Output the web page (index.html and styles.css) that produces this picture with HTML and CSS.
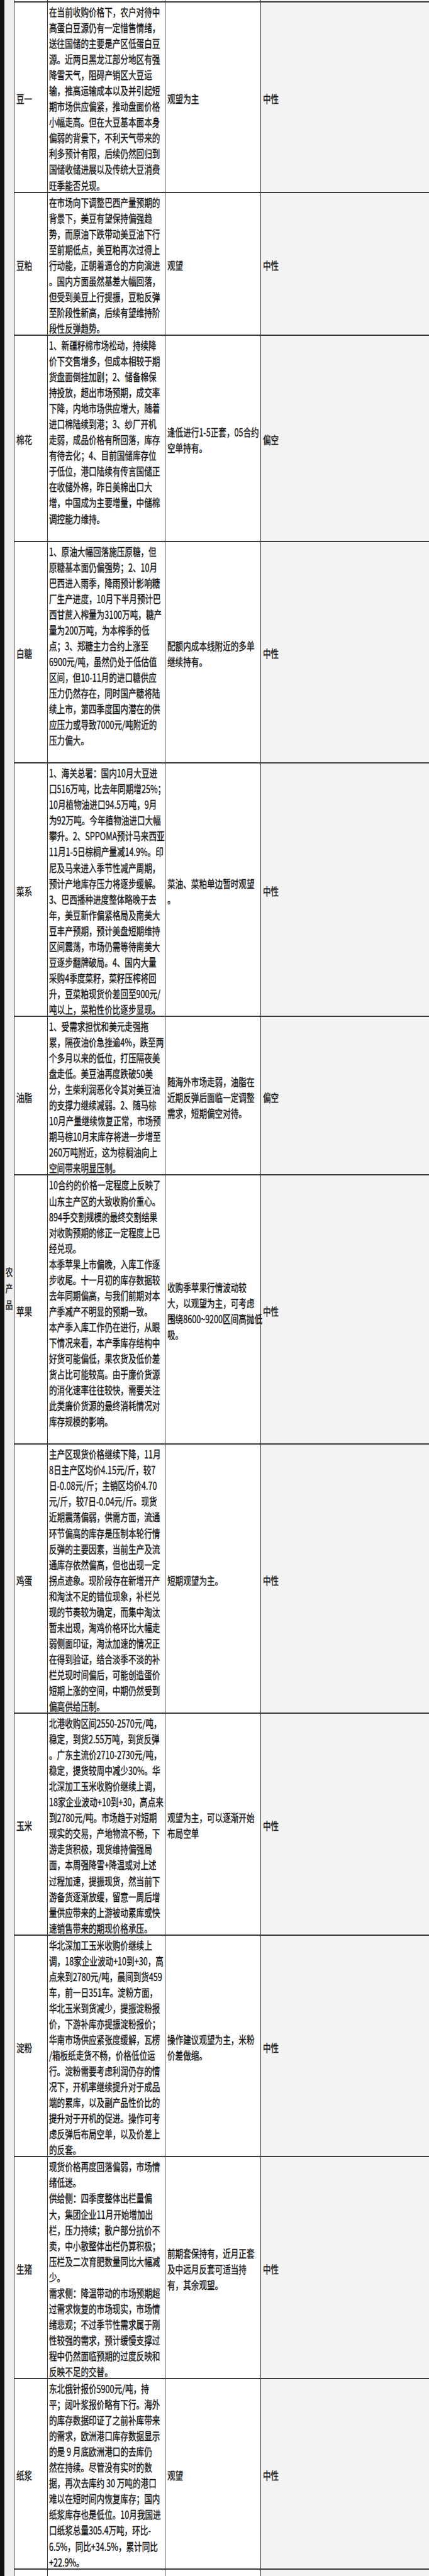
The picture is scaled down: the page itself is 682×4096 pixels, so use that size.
FILE: index.html
```html
<!DOCTYPE html>
<html lang="zh-CN">
<head>
<meta charset="utf-8">
<title>农产品策略</title>
<link rel="stylesheet" href="styles.css">
</head>
<body>
<div class="sheet">
  <div class="edge"></div>
  <table class="grid">
    <colgroup>
      <col class="c-sector"><col class="c-name"><col class="c-text"><col class="c-plan"><col class="c-view">
    </colgroup>
    <tbody>
      <tr class="stub">
        <td class="sector" rowspan="14"><span class="ln">农</span><span class="ln">产</span><span class="ln">品</span></td>
        <td class="name"></td><td class="text"></td><td class="plan"></td><td class="view"></td>
      </tr>
      <tr>
        <td class="name"><span class="ln">豆一</span></td>
        <td class="text"><span class="ln">在当前收购价格下，农户对待中</span><span class="ln">高蛋白豆源仍有一定惜售情绪，</span><span class="ln">送往国储的主要是产区低蛋白豆</span><span class="ln">源。近两日黑龙江部分地区有强</span><span class="ln">降雪天气，阻碍产销区大豆运</span><span class="ln">输，推高运输成本以及并引起短</span><span class="ln">期市场供应偏紧，推动盘面价格</span><span class="ln">小幅走高。但在大豆基本面本身</span><span class="ln">偏弱的背景下，不利天气带来的</span><span class="ln">利多预计有限，后续仍然回归到</span><span class="ln">国储收储进展以及传统大豆消费</span><span class="ln">旺季能否兑现。</span></td>
        <td class="plan"><span class="ln">观望为主</span></td>
        <td class="view"><span class="ln">中性</span></td>
      </tr>
      <tr>
        <td class="name"><span class="ln">豆粕</span></td>
        <td class="text"><span class="ln">在市场向下调整巴西产量预期的</span><span class="ln">背景下，美豆有望保持偏强趋</span><span class="ln">势，而原油下跌带动美豆油下行</span><span class="ln">至前期低点，美豆粕再次过得上</span><span class="ln">行动能，正朝着逼仓的方向演进</span><span class="ln">。国内方面虽然基差大幅回落，</span><span class="ln">但受到美豆上行提振，豆粕反弹</span><span class="ln">至阶段性新高，后续有望维持阶</span><span class="ln">段性反弹趋势。</span></td>
        <td class="plan"><span class="ln">观望</span></td>
        <td class="view"><span class="ln">中性</span></td>
      </tr>
      <tr>
        <td class="name"><span class="ln">棉花</span></td>
        <td class="text tail"><span class="ln">1、新疆籽棉市场松动，持续降</span><span class="ln">价下交售增多，但成本相较于期</span><span class="ln">货盘面倒挂加剧；2、储备棉保</span><span class="ln">持投放，超出市场预期，成交率</span><span class="ln">下降，内地市场供应增大，随着</span><span class="ln">进口棉陆续到港；3、纱厂开机</span><span class="ln">走弱，成品价格有所回落，库存</span><span class="ln">有待去化；4、目前国储库存位</span><span class="ln">于低位，港口陆续有传言国储正</span><span class="ln">在收储外棉，昨日美棉出口大</span><span class="ln">增，中国成为主要增量，中储棉</span><span class="ln">调控能力维持。</span></td>
        <td class="plan"><span class="ln">逢低进行1-5正套，05合约</span><span class="ln">空单持有。</span></td>
        <td class="view"><span class="ln">偏空</span></td>
      </tr>
      <tr>
        <td class="name"><span class="ln">白糖</span></td>
        <td class="text tail"><span class="ln">1、原油大幅回落施压原糖，但</span><span class="ln">原糖基本面仍偏强势；2、10月</span><span class="ln">巴西进入雨季，降雨预计影响糖</span><span class="ln">厂生产进度，10月下半月预计巴</span><span class="ln">西甘蔗入榨量为3100万吨，糖产</span><span class="ln">量为200万吨，为本榨季的低</span><span class="ln">点；3、郑糖主力合约上涨至</span><span class="ln">6900元/吨，虽然仍处于低估值</span><span class="ln">区间，但10-11月的进口糖供应</span><span class="ln">压力仍然存在，同时国产糖将陆</span><span class="ln">续上市，第四季度国内潜在的供</span><span class="ln">应压力或导致7000元/吨附近的</span><span class="ln">压力偏大。</span></td>
        <td class="plan"><span class="ln">配额内成本线附近的多单</span><span class="ln">继续持有。</span></td>
        <td class="view"><span class="ln">中性</span></td>
      </tr>
      <tr>
        <td class="name"><span class="ln">菜系</span></td>
        <td class="text"><span class="ln">1、海关总署：国内10月大豆进</span><span class="ln">口516万吨，比去年同期增25%；</span><span class="ln">10月植物油进口94.5万吨，9月</span><span class="ln">为92万吨。今年植物油进口大幅</span><span class="ln">攀升。2、SPPOMA预计马来西亚</span><span class="ln">11月1-5日棕榈产量减14.9%。印</span><span class="ln">尼及马来进入季节性减产周期，</span><span class="ln">预计产地库存压力将逐步缓解。</span><span class="ln">3、巴西播种进度整体略晚于去</span><span class="ln">年，美豆新作偏紧格局及南美大</span><span class="ln">豆丰产预期，预计美盘短期维持</span><span class="ln">区间震荡，市场仍需等待南美大</span><span class="ln">豆逐步翻牌破局。4、国内大量</span><span class="ln">采购4季度菜籽，菜籽压榨将回</span><span class="ln">升，豆菜粕现货价差回至900元/</span><span class="ln">吨以上，菜粕性价比逐步显现。</span></td>
        <td class="plan"><span class="ln">菜油、菜粕单边暂时观望</span><span class="ln">。</span></td>
        <td class="view"><span class="ln">中性</span></td>
      </tr>
      <tr>
        <td class="name"><span class="ln">油脂</span></td>
        <td class="text"><span class="ln">1、受需求担忧和美元走强拖</span><span class="ln">累，隔夜油价急挫逾4%，跌至两</span><span class="ln">个多月以来的低位，打压隔夜美</span><span class="ln">盘走低。美豆油再度跌破50美</span><span class="ln">分，生柴利润恶化令其对美豆油</span><span class="ln">的支撑力继续减弱。2、随马棕</span><span class="ln">10月产量继续恢复正常，市场预</span><span class="ln">期马棕10月末库存将进一步增至</span><span class="ln">260万吨附近，这为棕榈油向上</span><span class="ln">空间带来明显压制。</span></td>
        <td class="plan"><span class="ln">随海外市场走弱，油脂在</span><span class="ln">近期反弹后面临一定调整</span><span class="ln">需求，短期偏空对待。</span></td>
        <td class="view"><span class="ln">偏空</span></td>
      </tr>
      <tr>
        <td class="name"><span class="ln">苹果</span></td>
        <td class="text tail"><span class="ln">10合约的价格一定程度上反映了</span><span class="ln">山东主产区的大致收购价重心。</span><span class="ln">894手交割规模的最终交割结果</span><span class="ln">对收购预期的修正一定程度上已</span><span class="ln">经兑现。</span><span class="ln">本季苹果上市偏晚，入库工作逐</span><span class="ln">步收尾。十一月初的库存数据较</span><span class="ln">去年同期偏高，与我们前期对本</span><span class="ln">产季减产不明显的预期一致。</span><span class="ln">本产季入库工作仍在进行，从眼</span><span class="ln">下情况来看，本产季库存结构中</span><span class="ln">好货可能偏低，果农货及低价差</span><span class="ln">货占比可能较高。由于廉价货源</span><span class="ln">的消化速率往往较快，需要关注</span><span class="ln">此类廉价货源的最终消耗情况对</span><span class="ln">库存规模的影响。</span></td>
        <td class="plan"><span class="ln">收购季苹果行情波动较</span><span class="ln">大，以观望为主，可考虑</span><span class="ln">围绕8600~9200区间高抛低</span><span class="ln">吸。</span></td>
        <td class="view"><span class="ln">中性</span></td>
      </tr>
      <tr>
        <td class="name"><span class="ln">鸡蛋</span></td>
        <td class="text"><span class="ln">主产区现货价格继续下降，11月</span><span class="ln">8日主产区均价4.15元/斤，较7</span><span class="ln">日-0.08元/斤；主销区均价4.70</span><span class="ln">元/斤，较7日-0.04元/斤。现货</span><span class="ln">近期震荡偏弱，供需方面，流通</span><span class="ln">环节偏高的库存是压制本轮行情</span><span class="ln">反弹的主要因素，当前生产及流</span><span class="ln">通库存依然偏高，但也出现一定</span><span class="ln">拐点迹象。现阶段存在新增开产</span><span class="ln">和淘汰不足的错位现象，补栏兑</span><span class="ln">现的节奏较为确定，而集中淘汰</span><span class="ln">暂未出现，淘鸡价格环比大幅走</span><span class="ln">弱侧面印证，淘汰加速的情况正</span><span class="ln">在得到验证，结合淡季不淡的补</span><span class="ln">栏兑现时间偏后，可能创造蛋价</span><span class="ln">短期上涨的空间，中期仍然受到</span><span class="ln">偏高供给压制。</span></td>
        <td class="plan"><span class="ln">短期观望为主。</span></td>
        <td class="view"><span class="ln">中性</span></td>
      </tr>
      <tr>
        <td class="name"><span class="ln">玉米</span></td>
        <td class="text"><span class="ln">北港收购区间2550-2570元/吨，</span><span class="ln">稳定，到货2.55万吨，到货反弹</span><span class="ln">。广东主流价2710-2730元/吨，</span><span class="ln">稳定，提货较周中减少30%。华</span><span class="ln">北深加工玉米收购价继续上调，</span><span class="ln">18家企业波动+10到+30，高点来</span><span class="ln">到2780元/吨。市场趋于对短期</span><span class="ln">现实的交易，产地物流不畅，下</span><span class="ln">游走货积极，现货维持偏强局</span><span class="ln">面，本周强降雪+降温或对上述</span><span class="ln">过程加速，提振现货，然当前下</span><span class="ln">游备货逐渐放缓，留意一周后增</span><span class="ln">量供应带来的上游被动累库或快</span><span class="ln">速销售带来的期现价格承压。</span></td>
        <td class="plan"><span class="ln">观望为主，可以逐渐开始</span><span class="ln">布局空单</span></td>
        <td class="view"><span class="ln">中性</span></td>
      </tr>
      <tr>
        <td class="name"><span class="ln">淀粉</span></td>
        <td class="text"><span class="ln">华北深加工玉米收购价继续上</span><span class="ln">调，18家企业波动+10到+30，高</span><span class="ln">点来到2780元/吨，晨间到货459</span><span class="ln">车，前一日351车。淀粉方面，</span><span class="ln">华北玉米到货减少，提振淀粉报</span><span class="ln">价，下游补库亦提振淀粉报价；</span><span class="ln">华南市场供应紧张度缓解，瓦楞</span><span class="ln">/箱板纸走货不畅，价格低位运</span><span class="ln">行。淀粉需要考虑利润仍存的情</span><span class="ln">况下，开机率继续提升对于成品</span><span class="ln">端的累库，以及副产品性价比的</span><span class="ln">提升对于开机的促进。操作可考</span><span class="ln">虑反弹后布局空单，以及价差上</span><span class="ln">的反套。</span></td>
        <td class="plan"><span class="ln">操作建议观望为主，米粉</span><span class="ln">价差做缩。</span></td>
        <td class="view"><span class="ln">中性</span></td>
      </tr>
      <tr>
        <td class="name"><span class="ln">生猪</span></td>
        <td class="text"><span class="ln">现货价格再度回落偏弱，市场情</span><span class="ln">绪低迷。</span><span class="ln">供给侧：四季度整体出栏量偏</span><span class="ln">大，集团企业11月开始增加出</span><span class="ln">栏，压力持续；散户部分抗价不</span><span class="ln">卖，中小散整体出栏仍算积极；</span><span class="ln">压栏及二次育肥数量同比大幅减</span><span class="ln">少。</span><span class="ln">需求侧：降温带动的市场预期超</span><span class="ln">过需求恢复的市场现实，市场情</span><span class="ln">绪悲观；不过季节性需求属于刚</span><span class="ln">性较强的需求，预计缓慢支撑过</span><span class="ln">程中仍然面临预期的过度反映和</span><span class="ln">反映不足的交替。</span></td>
        <td class="plan"><span class="ln">前期套保持有，近月正套</span><span class="ln">及中远月反套可适当持</span><span class="ln">有，其余观望。</span></td>
        <td class="view"><span class="ln">中性</span></td>
      </tr>
      <tr>
        <td class="name"><span class="ln">纸浆</span></td>
        <td class="text"><span class="ln">东北俄针报价5900元/吨，持</span><span class="ln">平；阔叶浆报价略有下行。海外</span><span class="ln">的库存数据印证了之前补库带来</span><span class="ln">的需求，欧洲港口库存数据显示</span><span class="ln">的是 9 月底欧洲港口的去库仍</span><span class="ln">然在持续。尽管没有实时的数</span><span class="ln">据，再次去库约 30 万吨的港口</span><span class="ln">难以在短时间内恢复库存；国内</span><span class="ln">纸浆库存也是低位。10月我国进</span><span class="ln">口纸浆总量305.4万吨，环比-</span><span class="ln">6.5%，同比+34.5%，累计同比</span><span class="ln">+22.9%。</span></td>
        <td class="plan"><span class="ln">观望</span></td>
        <td class="view"><span class="ln">中性</span></td>
      </tr>
      <tr class="stub stub-end">
        <td class="name"></td><td class="text"></td><td class="plan"></td><td class="view"></td>
      </tr>
    </tbody>
  </table>
</div>
</body>
</html>
```

FILE: styles.css
```css
html, body {
  margin: 0;
  padding: 0;
  background: #ffffff;
}

body {
  font-family: "Noto Sans CJK SC", "Noto Sans", sans-serif;
  color: #111111;
}

.sheet {
  display: flex;
  align-items: stretch;
  width: 682px;
  overflow: hidden;
}

.edge {
  flex: none;
  width: 7px;
  background: #121212;
}

.grid {
  flex: none;
  width: 675px;
  table-layout: fixed;
  border-collapse: separate;
  border-spacing: 0;
  font-size: 12.6px;
  line-height: 25.05px;
  -webkit-text-stroke: 0.25px #111111;
}

.c-sector { width: 16px; }
.c-name { width: 53px; }
.c-text { width: 187px; }
.c-plan { width: 152px; }
.c-view { width: 267px; }

.grid td {
  padding: 0 3px;
  vertical-align: middle;
  text-align: left;
  border-right: 1px solid #3a3a3a;
  border-bottom: 2px solid #3a3a3a;
  background: #ffffff;
}

/* each printed line; the source sheet shows its glyphs drawn tall and narrow */
.ln {
  display: block;
  white-space: nowrap;
  transform: translateY(2px) scaleY(1.34);
}

.grid td.text {
  padding-left: 2px;
  padding-right: 0;
}

.grid td.view {
  border-right: 0;
  background: #f3f3f3;
}

.grid td.sector {
  padding: 0;
  text-align: center;
  font-size: 11.5px;
  line-height: 25.6px;
  background: #eeeeee;
  border-bottom: 0;
}

.grid td.tail {
  padding-bottom: 25.05px;
}

.stub td {
  height: 2px;
  padding-top: 0;
  padding-bottom: 0;
}

.stub-end td {
  height: 10px;
  border-bottom: 0;
}
```
